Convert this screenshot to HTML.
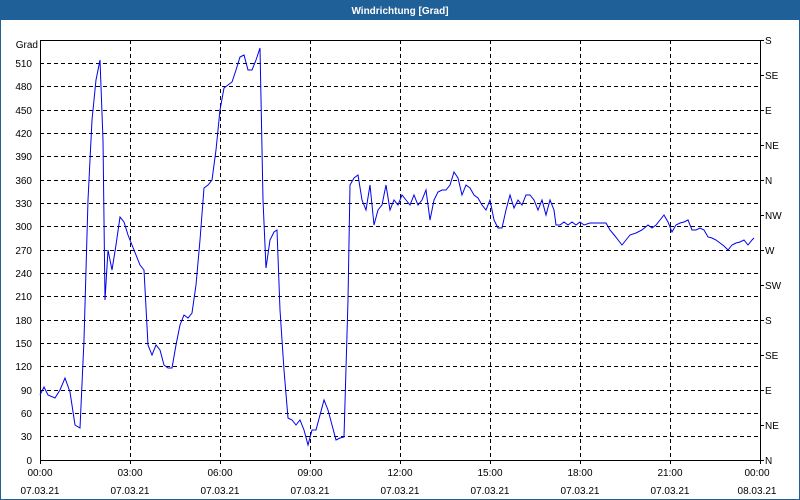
<!DOCTYPE html>
<html><head><meta charset="utf-8"><style>
html,body{margin:0;padding:0;width:800px;height:500px;overflow:hidden;background:#fff;}
svg{display:block}
text{font-family:"Liberation Sans",sans-serif;font-size:10px;fill:#000}
</style></head><body>
<svg width="800" height="500" viewBox="0 0 800 500">
<rect x="0" y="0" width="800" height="500" fill="#fff"/>
<rect x="0" y="0" width="800" height="20" fill="#1f6098"/>
<rect x="0.5" y="0.5" width="799" height="499" fill="none" stroke="#1f6098"/>
<text x="400" y="14" text-anchor="middle" style="fill:#fff;font-weight:bold;font-size:10px">Windrichtung [Grad]</text>
<g stroke="#000" stroke-dasharray="4,3" stroke-width="1">
<line x1="40" x2="760" y1="63.5" y2="63.5"/><line x1="40" x2="760" y1="86.5" y2="86.5"/><line x1="40" x2="760" y1="110.5" y2="110.5"/><line x1="40" x2="760" y1="133.5" y2="133.5"/><line x1="40" x2="760" y1="156.5" y2="156.5"/><line x1="40" x2="760" y1="180.5" y2="180.5"/><line x1="40" x2="760" y1="203.5" y2="203.5"/><line x1="40" x2="760" y1="226.5" y2="226.5"/><line x1="40" x2="760" y1="250.5" y2="250.5"/><line x1="40" x2="760" y1="273.5" y2="273.5"/><line x1="40" x2="760" y1="296.5" y2="296.5"/><line x1="40" x2="760" y1="320.5" y2="320.5"/><line x1="40" x2="760" y1="343.5" y2="343.5"/><line x1="40" x2="760" y1="366.5" y2="366.5"/><line x1="40" x2="760" y1="390.5" y2="390.5"/><line x1="40" x2="760" y1="413.5" y2="413.5"/><line x1="40" x2="760" y1="436.5" y2="436.5"/>
<line y1="40" y2="460" x1="130.5" x2="130.5"/><line y1="40" y2="460" x1="220.5" x2="220.5"/><line y1="40" y2="460" x1="310.5" x2="310.5"/><line y1="40" y2="460" x1="400.5" x2="400.5"/><line y1="40" y2="460" x1="490.5" x2="490.5"/><line y1="40" y2="460" x1="580.5" x2="580.5"/><line y1="40" y2="460" x1="670.5" x2="670.5"/>
</g>
<rect x="40.5" y="40.5" width="720" height="420" fill="none" stroke="#000"/>
<g stroke="#000">
<line x1="760" x2="764" y1="40.5" y2="40.5"/><line x1="760" x2="764" y1="75.5" y2="75.5"/><line x1="760" x2="764" y1="110.5" y2="110.5"/><line x1="760" x2="764" y1="145.5" y2="145.5"/><line x1="760" x2="764" y1="180.5" y2="180.5"/><line x1="760" x2="764" y1="215.5" y2="215.5"/><line x1="760" x2="764" y1="250.5" y2="250.5"/><line x1="760" x2="764" y1="285.5" y2="285.5"/><line x1="760" x2="764" y1="320.5" y2="320.5"/><line x1="760" x2="764" y1="355.5" y2="355.5"/><line x1="760" x2="764" y1="390.5" y2="390.5"/><line x1="760" x2="764" y1="425.5" y2="425.5"/><line x1="760" x2="764" y1="460.5" y2="460.5"/>
<line x1="40.5" x2="40.5" y1="460" y2="464"/><line x1="130.5" x2="130.5" y1="460" y2="464"/><line x1="220.5" x2="220.5" y1="460" y2="464"/><line x1="310.5" x2="310.5" y1="460" y2="464"/><line x1="400.5" x2="400.5" y1="460" y2="464"/><line x1="490.5" x2="490.5" y1="460" y2="464"/><line x1="580.5" x2="580.5" y1="460" y2="464"/><line x1="670.5" x2="670.5" y1="460" y2="464"/><line x1="760.5" x2="760.5" y1="460" y2="464"/>
</g>
<g text-anchor="end">
<text x="38" y="48">Grad</text>
<text x="32" y="67">510</text><text x="32" y="90">480</text><text x="32" y="114">450</text><text x="32" y="137">420</text><text x="32" y="160">390</text><text x="32" y="184">360</text><text x="32" y="207">330</text><text x="32" y="230">300</text><text x="32" y="254">270</text><text x="32" y="277">240</text><text x="32" y="300">210</text><text x="32" y="324">180</text><text x="32" y="347">150</text><text x="32" y="370">120</text><text x="32" y="394">90</text><text x="32" y="417">60</text><text x="32" y="440">30</text><text x="32" y="464">0</text>
</g>
<g>
<text x="765" y="44">S</text><text x="765" y="79">SE</text><text x="765" y="114">E</text><text x="765" y="149">NE</text><text x="765" y="184">N</text><text x="765" y="219">NW</text><text x="765" y="254">W</text><text x="765" y="289">SW</text><text x="765" y="324">S</text><text x="765" y="359">SE</text><text x="765" y="394">E</text><text x="765" y="429">NE</text><text x="765" y="464">N</text>
</g>
<g text-anchor="middle">
<text x="40" y="476">00:00</text><text x="130" y="476">03:00</text><text x="220" y="476">06:00</text><text x="310" y="476">09:00</text><text x="400" y="476">12:00</text><text x="490" y="476">15:00</text><text x="580" y="476">18:00</text><text x="670" y="476">21:00</text><text x="757" y="476">00:00</text>
<text x="40" y="494">07.03.21</text><text x="130" y="494">07.03.21</text><text x="220" y="494">07.03.21</text><text x="310" y="494">07.03.21</text><text x="400" y="494">07.03.21</text><text x="490" y="494">07.03.21</text><text x="580" y="494">07.03.21</text><text x="670" y="494">07.03.21</text><text x="757" y="494">08.03.21</text>
</g>
<polyline fill="none" stroke="#0000ee" stroke-width="1" points="40,395 44,387 48,395 55,398 60,390 65,378 70,392 75,425 80,428 84,340 88,200 92,120 96,80 100,60 103,140 105,300 108,250 112,270 116,245 120,217 124,222 128,235 132,245 136,255 140,265 144,270 148,345 152,355 156,345 160,350 164,365 168,368 172,368 176,345 180,325 184,315 188,318 192,313 196,285 200,240 204,188 208,185 212,180 216,150 220,110 224,88 228,85 232,82 236,70 240,57 244,55 248,70 252,70 256,60 260,48 263,200 266,268 270,240 274,232 277,230 280,310 284,370 288,418 292,420 296,425 300,420 304,430 308,445 312,430 316,430 320,415 324,400 328,410 332,425 336,440 340,438 344,437 348,300 350,185 354,178 358,175 362,200 366,210 370,185 374,225 378,210 382,205 386,185 390,210 394,200 398,205 402,195 406,200 410,205 414,195 418,205 422,200 426,190 430,220 434,200 438,192 442,190 446,190 450,185 454,172 458,178 462,195 466,185 470,188 474,195 478,198 482,205 486,210 490,200 494,220 498,228 502,228 506,210 510,195 514,208 518,200 522,205 526,195 530,195 534,200 538,210 542,200 546,215 550,200 554,210 556,225 560,225 564,222 568,225 572,222 576,225 580,222 584,225 590,223 600,223 606,223 610,230 615,236 622,245 626,240 630,235 636,233 642,230 648,225 652,228 656,225 660,220 664,215 668,222 672,232 676,225 680,223 684,222 688,220 692,230 696,230 700,228 704,230 708,237 712,238 716,240 720,243 724,246 728,250 732,245 736,243 740,242 744,240 748,245 752,240 754,238"/>
</svg>
</body></html>
